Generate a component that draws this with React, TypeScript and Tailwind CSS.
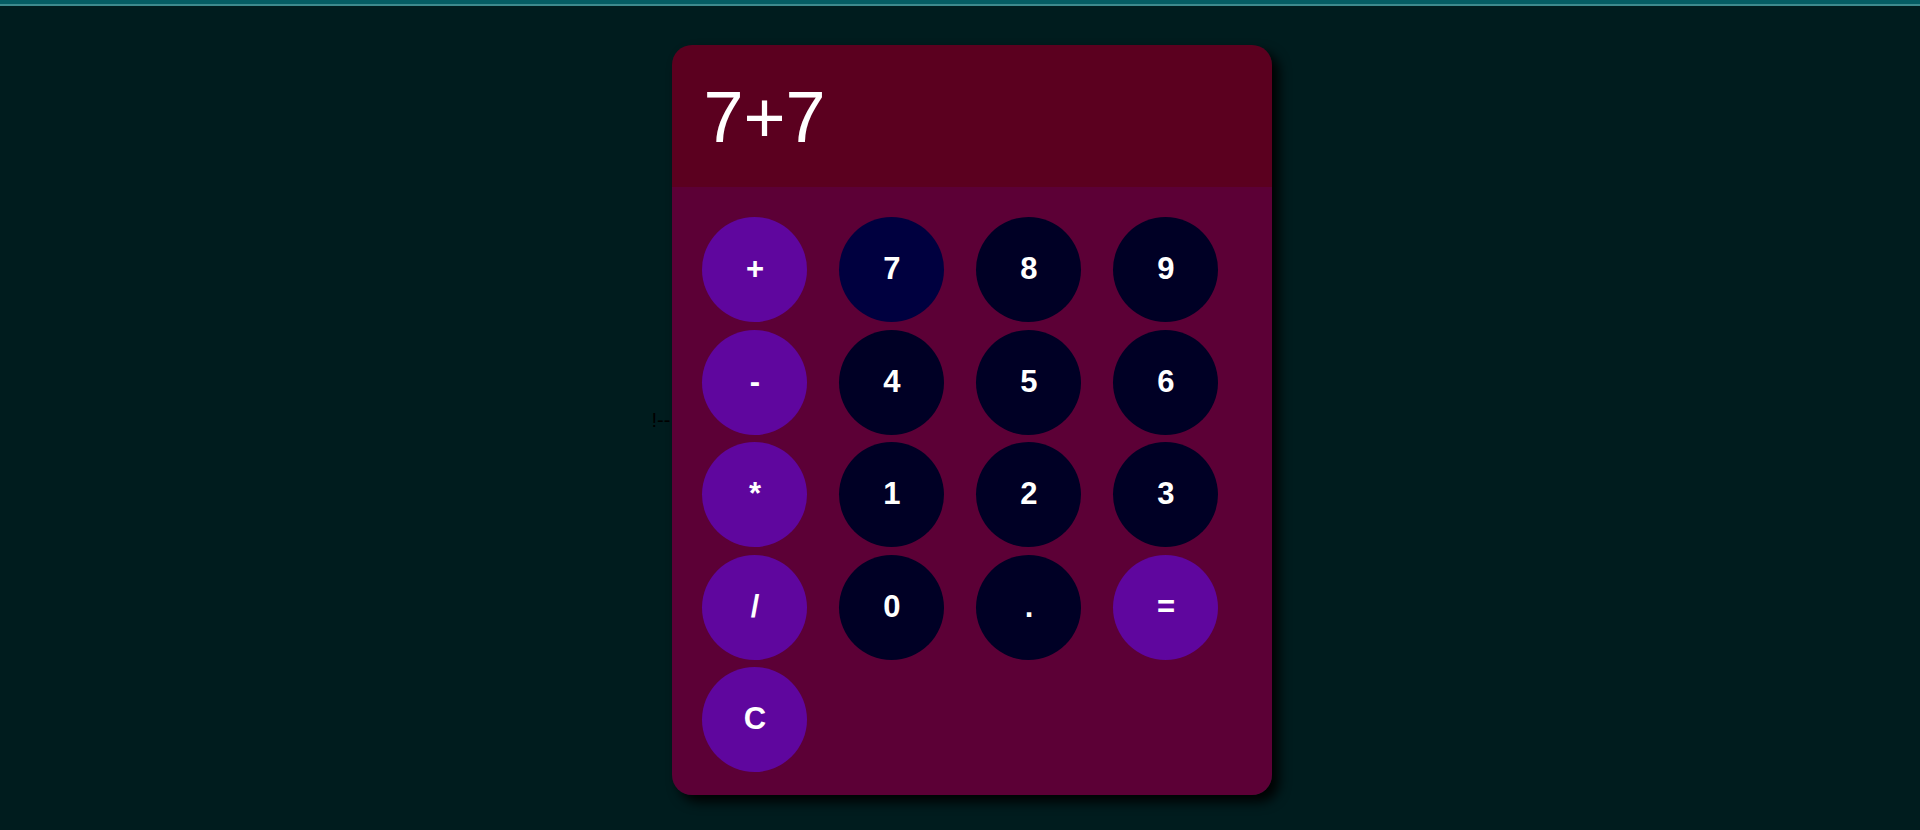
import { useState } from 'react';

// Calculator keypad, laid out column by column as in the reference
const ROWS: string[][] = [
  ['+', '7', '8', '9'],
  ['-', '4', '5', '6'],
  ['*', '1', '2', '3'],
  ['/', '0', '.', '='],
  ['C'],
];

const OPS = new Set(['+', '-', '*', '/', '=', 'C']);

function Key({ label, active, onPress }: { label: string; active: boolean; onPress: () => void }) {
  const op = OPS.has(label);
  return (
    <button
      onClick={onPress}
      className={`flex h-[105px] w-[105px] items-center justify-center rounded-full text-[31px] font-bold text-white ${
        op ? 'bg-[#5f069e]' : active ? 'bg-[#00003f]' : 'bg-[#000025]'
      }`}
    >
      {label}
    </button>
  );
}

export default function App() {
  const [expr, setExpr] = useState('7+7');
  const [last, setLast] = useState('7');

  const press = (k: string) => {
    setLast(k);
    if (k === 'C') return setExpr('');
    if (k === '=') {
      try {
        // eslint-disable-next-line no-new-func
        setExpr(String(Function(`return (${expr})`)()));
      } catch {
        setExpr('Error');
      }
      return;
    }
    setExpr((e) => e + k);
  };

  return (
    <div className="min-h-[830px] bg-[#001c1e]" style={{ fontFamily: '"Liberation Sans", Arial, sans-serif' }}>
      <div className="h-[4px] bg-[#055c63]" />
      <div className="h-[2px] bg-[#3d8a8e]" />
      <div className="flex items-center justify-center pl-[4px] pt-[39px]">
        <span className="pr-[2px] text-[20px] leading-none text-black">!--</span>
        <div className="w-[600px] overflow-hidden rounded-[20px] shadow-[7px_7px_12px_rgba(0,0,0,0.95)]">
          <div className="h-[142px] bg-[#5b001f] pl-[31px] pt-[27px] text-[72px] leading-[90px] text-white">
            {expr}
          </div>
          <div className="bg-[#5c0036] px-[30px] pb-[23px] pt-[30px]">
            <div className="grid grid-cols-[repeat(4,105px)] gap-x-[32px] gap-y-[7.5px]">
              {ROWS.flat().map((k) => (
                <Key key={k} label={k} active={k === last} onPress={() => press(k)} />
              ))}
            </div>
          </div>
        </div>
      </div>
    </div>
  );
}
